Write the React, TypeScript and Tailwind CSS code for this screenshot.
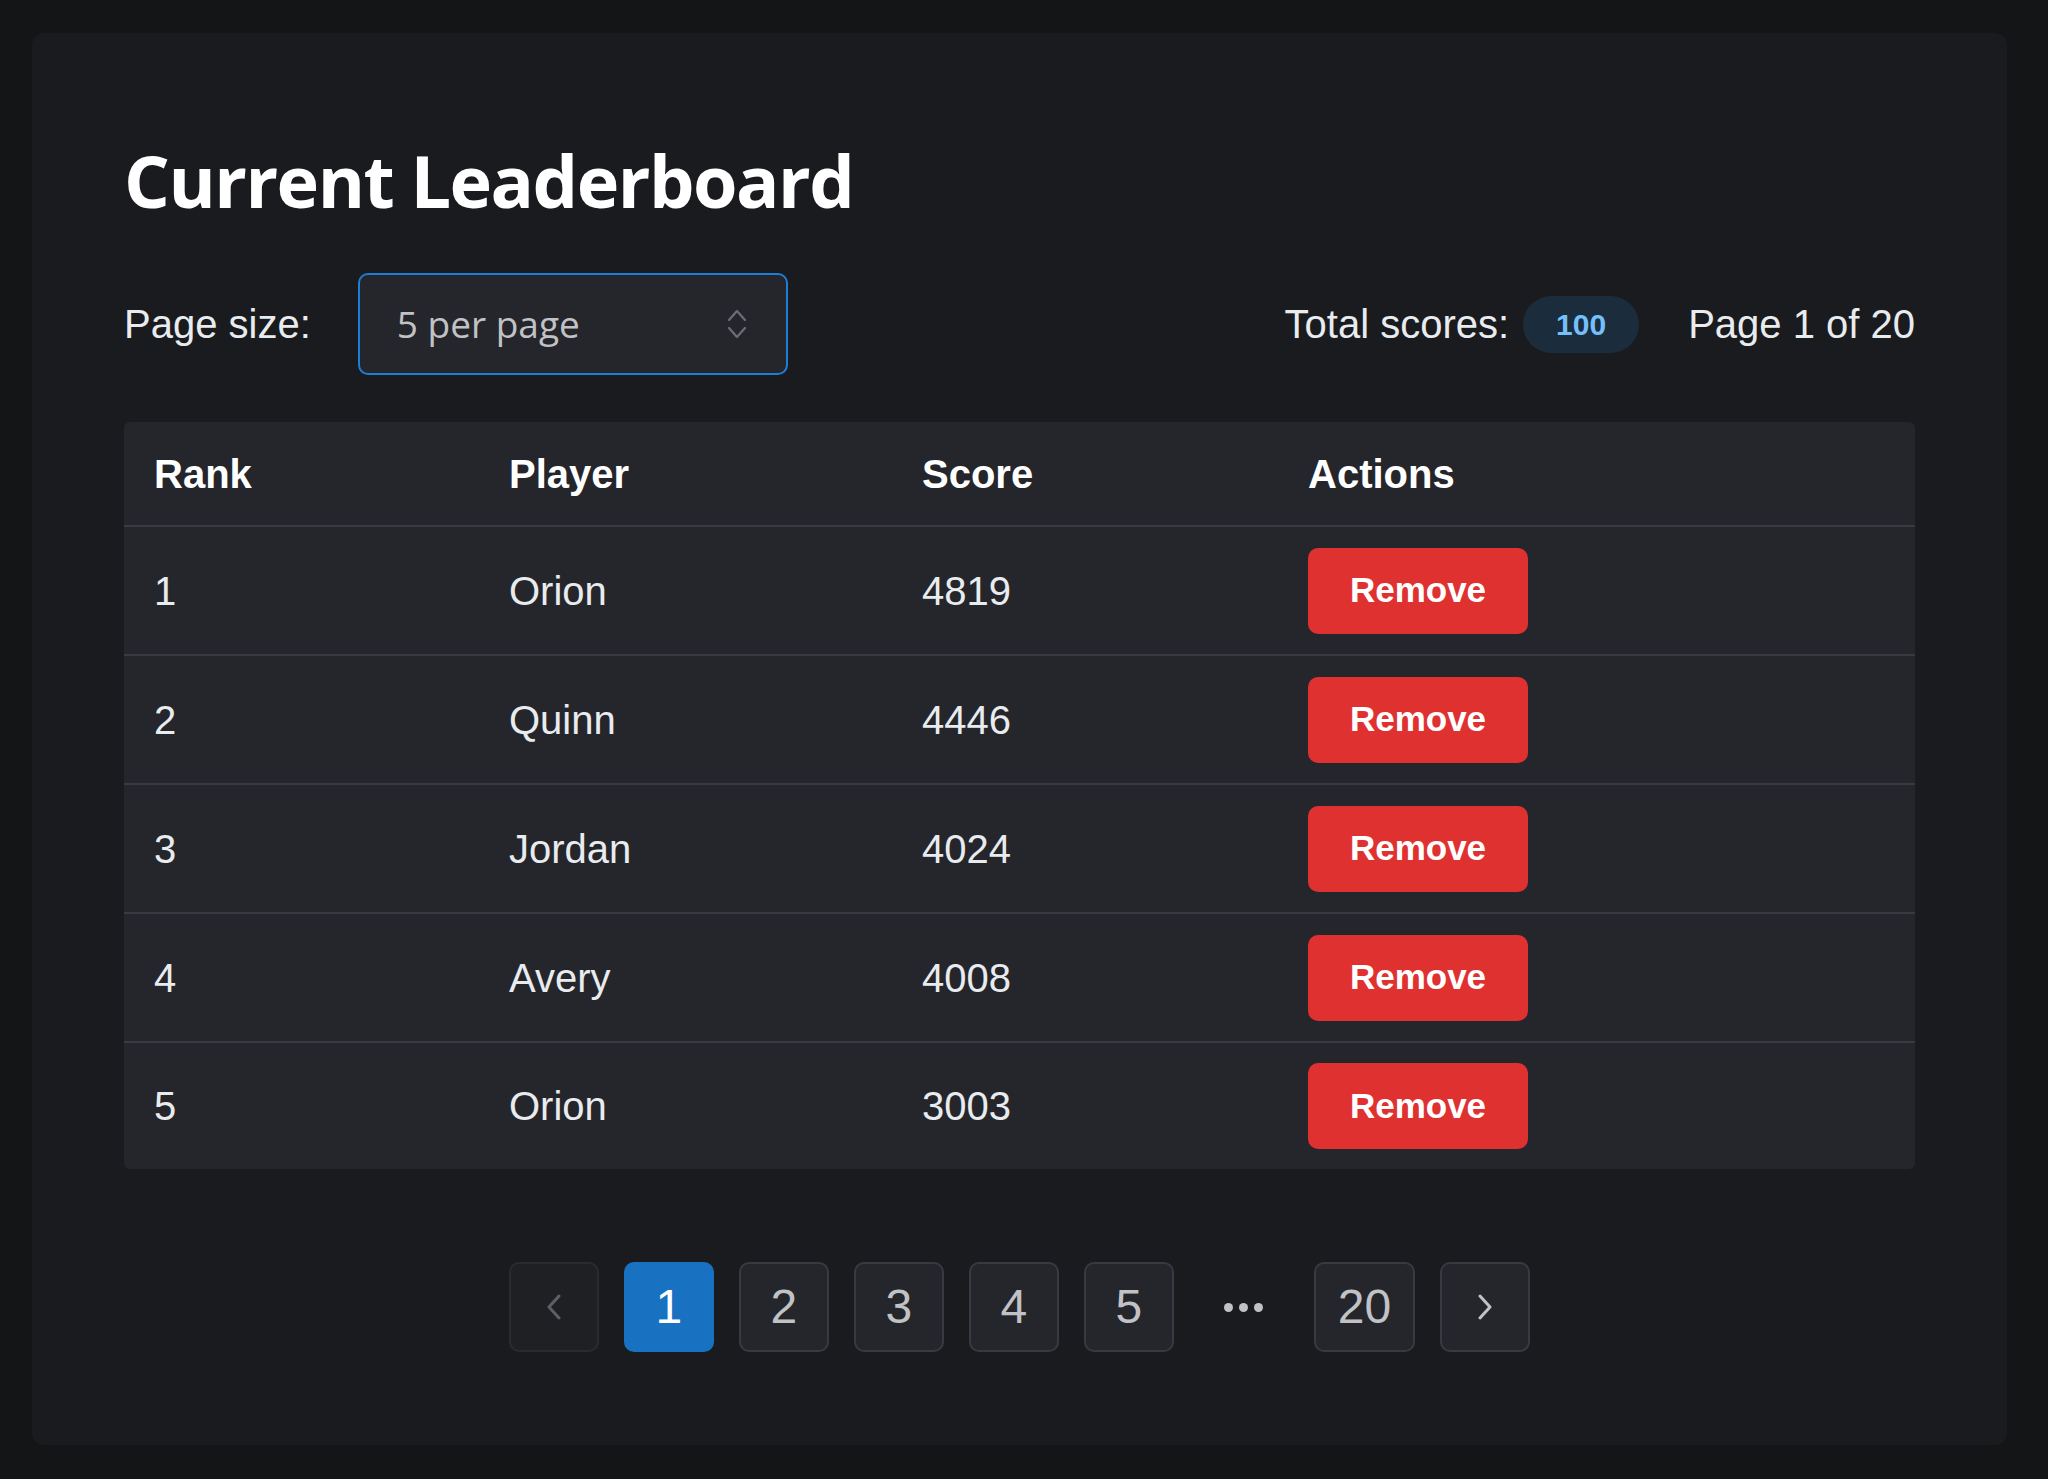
import React from "react";

const rows = [
  { rank: 1, player: "Orion", score: 4819 },
  { rank: 2, player: "Quinn", score: 4446 },
  { rank: 3, player: "Jordan", score: 4024 },
  { rank: 4, player: "Avery", score: 4008 },
  { rank: 5, player: "Orion", score: 3003 },
];

function ChevronLeft({ className }: { className?: string }) {
  return (
    <svg viewBox="0 0 18 26" width="18" height="26" className={className} fill="none" stroke="currentColor" strokeWidth="3" strokeLinecap="round" strokeLinejoin="round">
      <path d="M14 2 L4 13 L14 24" />
    </svg>
  );
}

function ChevronRight({ className }: { className?: string }) {
  return (
    <svg viewBox="0 0 18 26" width="18" height="26" className={className} fill="none" stroke="currentColor" strokeWidth="3" strokeLinecap="round" strokeLinejoin="round">
      <path d="M4 2 L14 13 L4 24" />
    </svg>
  );
}

function UpDown() {
  return (
    <svg viewBox="0 0 22 30" width="22" height="30" fill="none" stroke="currentColor" strokeWidth="2.2" strokeLinecap="round" strokeLinejoin="round" className="text-[#6b6e75]">
      <path d="M3 11 L11 2 L19 11" />
      <path d="M3 19 L11 28 L19 19" />
    </svg>
  );
}

function PageBtn({ children, active, wide }: { children: React.ReactNode; active?: boolean; wide?: boolean }) {
  const pad = wide ? "px-[22px]" : "px-[20px]";
  return (
    <div
      className={
        active
          ? "h-[90px] min-w-[90px] px-[20px] rounded-[10px] bg-[#1971c2] border-2 border-[#1971c2] flex items-center justify-center text-white text-[48px]"
          : `h-[90px] min-w-[90px] ${pad} rounded-[10px] bg-[#25262b] border-2 border-[#373a40] flex items-center justify-center text-[#c1c2c5] text-[48px]`
      }
    >
      {children}
    </div>
  );
}

export default function App() {
  return (
    <div className="min-h-[1479px] w-[2048px] bg-[#141517] pt-[33px] pl-[32px]" style={{ fontFamily: '"Liberation Sans", Arial, sans-serif' }}>
      <div className="w-[1975px] rounded-[12px] bg-[#1a1b1e] px-[92px] pt-[100px] pb-[93px]">
        <h1
          className="text-white font-bold text-[72px] leading-[94px] tracking-[-1.5px]"
          style={{ fontFamily: '"Open Sans", "Noto Sans", sans-serif' }}
        >
          Current Leaderboard
        </h1>

        <div className="mt-[46px] flex items-center justify-between h-[102px]">
          <div className="flex items-center">
            <span className="text-[40px] text-[#e9ecef]">Page size:</span>
            <div className="ml-[47px] w-[430px] h-[102px] rounded-[10px] border-2 border-[#1c7ed6] bg-[#25262b] flex items-center justify-between pl-[37px] pr-[38px]">
              <span className="text-[37px] text-[#c1c2c5]" style={{ fontFamily: '"Open Sans", "Noto Sans", sans-serif' }}>
                5 per page
              </span>
              <UpDown />
            </div>
          </div>
          <div className="flex items-center">
            <span className="text-[40px] text-[#e9ecef]">Total scores:</span>
            <span className="ml-[14px] h-[57px] w-[116px] rounded-full bg-[#1b2c3c] text-[#74c0fc] font-bold text-[30px] flex items-center justify-center">
              100
            </span>
            <span className="ml-[49px] text-[40px] text-[#e9ecef]">Page 1 of 20</span>
          </div>
        </div>

        <div className="mt-[47px] rounded-[6px] overflow-hidden bg-[#25262b]">
          <table className="w-full table-fixed border-collapse">
            <colgroup>
              <col className="w-[355px]" />
              <col className="w-[413px]" />
              <col className="w-[386px]" />
              <col />
            </colgroup>
            <thead>
              <tr className="h-[104px] border-b-2 border-[#373a40]">
                {["Rank", "Player", "Score", "Actions"].map((h) => (
                  <th key={h} className="text-left pl-[30px] text-[40px] font-bold text-white align-middle">
                    {h}
                  </th>
                ))}
              </tr>
            </thead>
            <tbody>
              {rows.map((r, i) => (
                <tr key={i} className={i < rows.length - 1 ? "h-[129px] border-b-2 border-[#373a40]" : "h-[127px]"}>
                  <td className="pl-[30px] text-[40px] text-[#e9ecef] align-middle">{r.rank}</td>
                  <td className="pl-[30px] text-[40px] text-[#e9ecef] align-middle">{r.player}</td>
                  <td className="pl-[30px] text-[40px] text-[#e9ecef] align-middle">{r.score}</td>
                  <td className="pl-[30px] align-middle">
                    <button className="w-[220px] h-[86px] rounded-[10px] bg-[#e03131] text-white font-bold text-[35px] flex items-center justify-center">
                      Remove
                    </button>
                  </td>
                </tr>
              ))}
            </tbody>
          </table>
        </div>

        <div className="mt-[93px] flex justify-center items-center gap-[25px]">
          <div className="h-[90px] w-[90px] rounded-[10px] bg-[#1f2023] border-2 border-[#2a2b2f] flex items-center justify-center text-[#5c5f66]">
            <ChevronLeft />
          </div>
          <PageBtn active>1</PageBtn>
          <PageBtn>2</PageBtn>
          <PageBtn>3</PageBtn>
          <PageBtn>4</PageBtn>
          <PageBtn>5</PageBtn>
          <div className="h-[90px] w-[90px] flex items-center justify-center gap-[6px]">
            <span className="w-[9px] h-[9px] rounded-full bg-[#c1c2c5]" />
            <span className="w-[9px] h-[9px] rounded-full bg-[#c1c2c5]" />
            <span className="w-[9px] h-[9px] rounded-full bg-[#c1c2c5]" />
          </div>
          <PageBtn wide>20</PageBtn>
          <div className="h-[90px] w-[90px] rounded-[10px] bg-[#25262b] border-2 border-[#373a40] flex items-center justify-center text-[#c1c2c5]">
            <ChevronRight />
          </div>
        </div>
      </div>
    </div>
  );
}
